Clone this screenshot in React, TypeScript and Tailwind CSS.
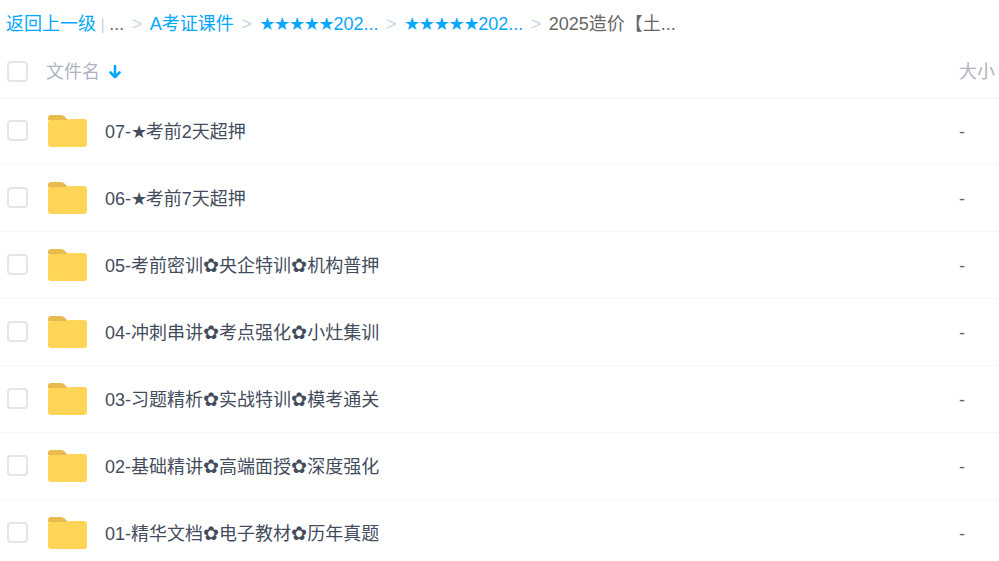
const rows = [
  '07-★考前2天超押',
  '06-★考前7天超押',
  '05-考前密训✿央企特训✿机构普押',
  '04-冲刺串讲✿考点强化✿小灶集训',
  '03-习题精析✿实战特训✿模考通关',
  '02-基础精讲✿高端面授✿深度强化',
  '01-精华文档✿电子教材✿历年真题',
];

// the star and flower glyphs run a little off the text size in the original
const Glyphs = ({ text }: { text: string }) => (
  <>
    {text.split(/([★✿])/).map((part, i) => {
      if (part === '★') return <span key={i} className="tracking-[-1.3px] leading-none">★</span>;
      if (part === '✿') return <span key={i} className="text-[19.2px] leading-none">✿</span>;
      return part;
    })}
  </>
);

const Checkbox = () => (
  <span className="ml-[7px] mb-[3px] block w-[21px] h-[21px] shrink-0 rounded-[4px] border-2 border-[#e2e5ee] bg-white" />
);

const FolderIcon = () => (
  <svg width="39" height="32" viewBox="0 0 39 32" className="block shrink-0">
    <path d="M0 3a3 3 0 0 1 3-3h10c2 0 3 1 4 2l3 3H0z" fill="#e9bb4f" />
    <path d="M0 7a2 2 0 0 1 2-2h18l1-1h15a3 3 0 0 1 3 3v22a3 3 0 0 1-3 3H3a3 3 0 0 1-3-3z" fill="#ffd558" />
  </svg>
);

const Sep = () => <span className="mx-[7.5px] text-[#c5d5ea]">&gt;</span>;

const App = () => {
  return (
    <div className="w-[999px] h-[561px] overflow-hidden bg-white font-['Liberation_Sans','DejaVu_Sans','Noto_Sans_CJK_SC',sans-serif]">
      <div className="flex items-center h-[47px] pl-[6px] pt-[2px] text-[18px] text-[#06a7ff] whitespace-nowrap">
        <span>返回上一级</span>
        <span className="mx-[4.5px] text-[#c5d5ea] text-[16px]">|</span>
        <span className="text-[#666]">...</span>
        <Sep />
        <span>A考证课件</span>
        <Sep />
        <span><Glyphs text="★★★★★202..." /></span>
        <Sep />
        <span><Glyphs text="★★★★★202..." /></span>
        <Sep />
        <span className="text-[#666]">2025造价【土...</span>
      </div>
      <div className="flex items-center h-[52px] border-b border-[#f1f2f6] text-[18px] text-[#afb3bf]">
        <Checkbox />
        <span className="ml-[18px]">文件名</span>
        <svg width="14" height="16" viewBox="0 0 14 16" className="ml-[8px]" fill="none" stroke="#06a7ff" strokeWidth="2.6" strokeLinecap="round" strokeLinejoin="round">
          <path d="M7 1v11M2.500 7.500 7 12l4.500-4.500" />
        </svg>
        <span className="ml-auto w-[40px]">大小</span>
      </div>
      <div className="-mt-px">
        {rows.map((name) => (
          <div key={name} className="flex items-center h-[67px] pt-[2px] border-b border-[#f5f6fa] text-[18px] text-[#434c5c]">
            <Checkbox />
            <span className="ml-[20px] mb-[2px]"><FolderIcon /></span>
            <span className="ml-[18px] whitespace-nowrap"><Glyphs text={name} /></span>
            <span className="ml-auto w-[40px] text-[#666]">-</span>
          </div>
        ))}
      </div>
    </div>
  );
};

export default App;
